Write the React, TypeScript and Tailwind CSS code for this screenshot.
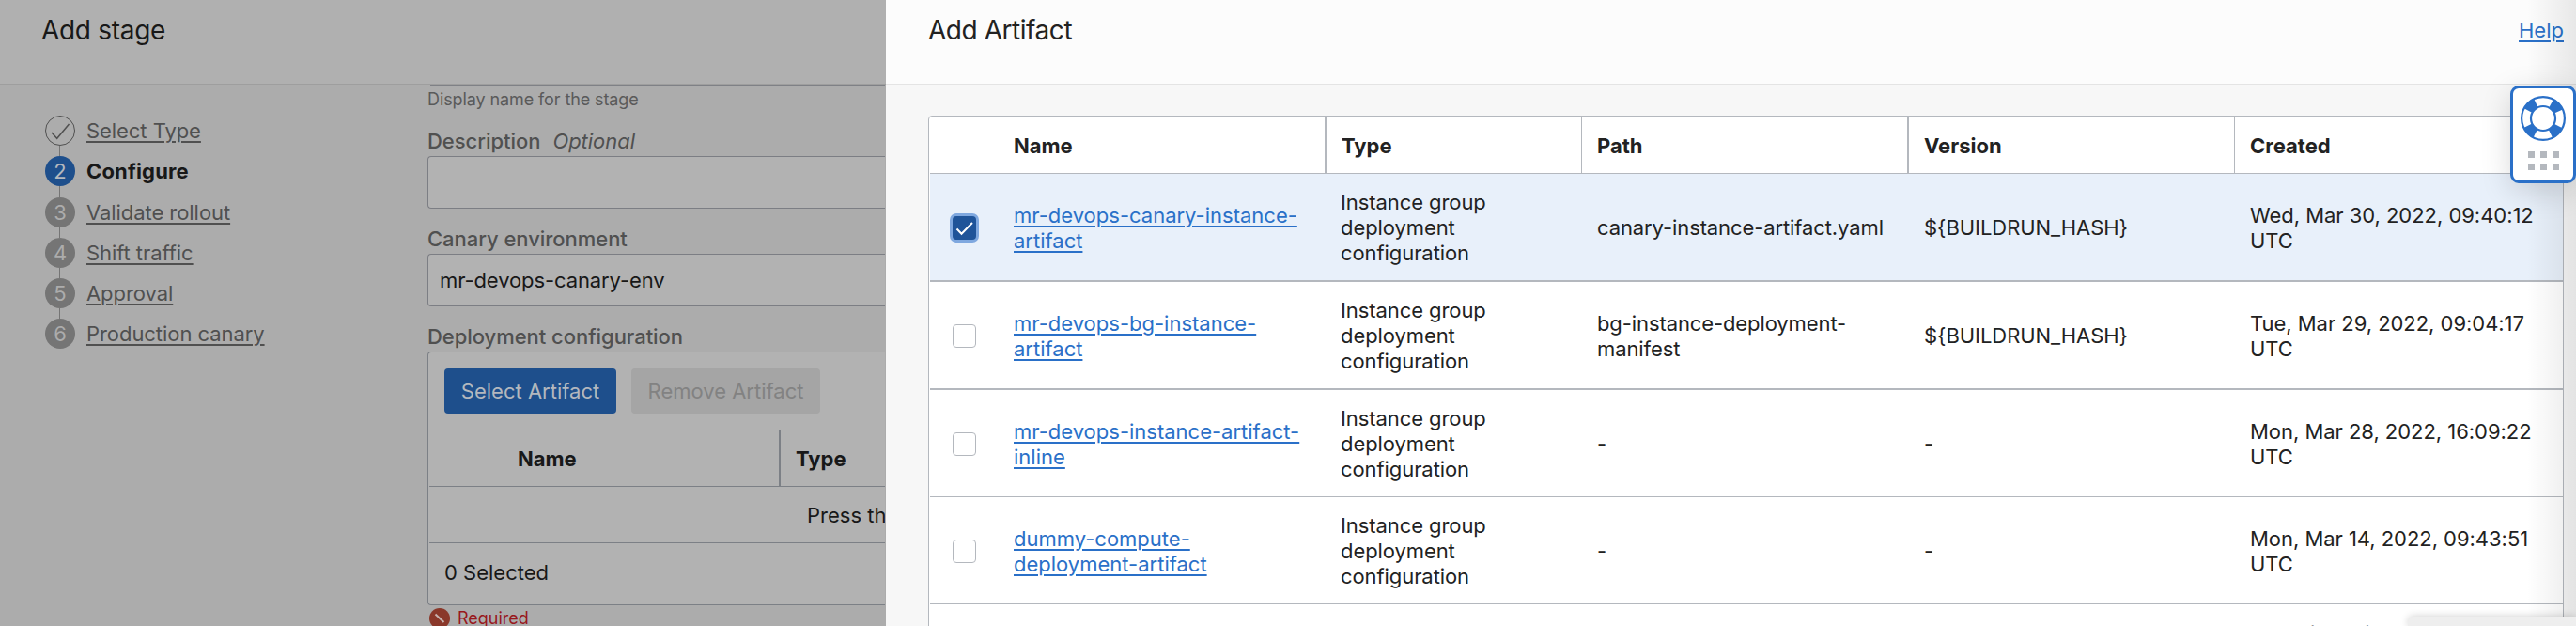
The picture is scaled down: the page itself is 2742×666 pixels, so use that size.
import type { ReactNode } from "react";

const steps = ["Select Type", "Configure", "Validate rollout", "Shift traffic", "Approval", "Production canary"];
const stepGap = ["h-[11px]", "h-[12px]", "h-[11px]", "h-[11px]", "h-[11px]"];

const TYPE = ["Instance group", "deployment", "configuration"];
type Row = { name: string[]; path: string[]; version: string; created: string; size: string; checked?: boolean };
const rows: Row[] = [
  { name: ["mr-devops-canary-instance-", "artifact"], path: ["canary-instance-artifact.yaml"], version: "${BUILDRUN_HASH}", created: "Wed, Mar 30, 2022, 09:40:12", size: "h-[115px] border-b-2 bg-[#e8f0fa]", checked: true },
  { name: ["mr-devops-bg-instance-", "artifact"], path: ["bg-instance-deployment-", "manifest"], version: "${BUILDRUN_HASH}", created: "Tue, Mar 29, 2022, 09:04:17", size: "h-[115px] border-b-2" },
  { name: ["mr-devops-instance-artifact-", "inline"], path: ["-"], version: "-", created: "Mon, Mar 28, 2022, 16:09:22", size: "h-[114px] border-b" },
  { name: ["dummy-compute-", "deployment-artifact"], path: ["-"], version: "-", created: "Mon, Mar 14, 2022, 09:43:51", size: "h-[114px] border-b" },
];
const cols = "grid grid-cols-[89px_348px_273px_348px_347px_349px]";

function Lines({ items }: { items: string[] }) {
  return (
    <>
      {items.map((t) => (
        <span key={t} className="block whitespace-nowrap">{t}</span>
      ))}
    </>
  );
}

function Label({ children }: { children: ReactNode }) {
  return <div className="flex h-[27px] items-center whitespace-nowrap font-medium tracking-[-0.04px] text-[#505050]">{children}</div>;
}

function StagePanel() {
  return (
    <section className="relative h-full w-[943px] shrink-0 overflow-hidden bg-[#acacac]">
      <header className="h-[90px] border-b border-[#9e9e9e] bg-[#b0b0b0] pl-[44px] pt-[14px] text-[28px] leading-[36px] tracking-[-0.3px] text-[#181818]">
        Add stage
      </header>
      <div className="flex text-[#181818]">
        <ol className="w-[455px] shrink-0 pl-12 pt-[33px]">
          {steps.map((s, i) => (
            <li key={s}>
              <div className="flex h-8 items-center">
                {i === 0 ? (
                  <svg className="size-8 shrink-0" viewBox="0 0 32 32" fill="none" stroke="#505050">
                    <circle cx="16" cy="16" r="15.5" />
                    <path d="M7 18l5.7 6.3L25.5 9" strokeWidth="1.5" />
                  </svg>
                ) : (
                  <span className={`flex size-8 shrink-0 items-center justify-center rounded-full text-[22px] leading-none ${i === 1 ? "bg-[#1e4f8c] text-[#b4b8be]" : "bg-[#757575] text-[#acacac]"}`}>
                    {i + 1}
                  </span>
                )}
                <span className={`ml-3 whitespace-nowrap ${i === 1 ? "font-bold tracking-[0.15px]" : "tracking-[-0.06px] text-[#505050] underline decoration-[2px] underline-offset-[3px]"}`}>{s}</span>
              </div>
              {i < 5 && <div className={`ml-[15px] w-px bg-[#757575] ${stepGap[i]}`} />}
            </li>
          ))}
        </ol>
        <div className="w-[487px] shrink-0">
          <div className="ml-[3px] h-px bg-[#7f8186]" />
          <div className="mt-[4px] h-[22px] whitespace-nowrap text-[18px] leading-[22px] tracking-[-0.1px] text-[#5a5a5a]">Display name for the stage</div>
          <div className="mt-[20px]">
            <Label>Description<span className="ml-[13px] font-normal italic">Optional</span></Label>
          </div>
          <div className="mt-[2px] h-[56px] rounded-l-[4px] border border-r-0 border-[#7c7e84] bg-[#b2b2b2]" />
          <div className="mt-[19px]"><Label>Canary environment</Label></div>
          <div className="mt-[2px] flex h-[56px] items-center whitespace-nowrap rounded-l-[4px] border border-r-0 border-[#7c7e84] bg-[#b2b2b2] pl-[12px] pt-px tracking-[-0.1px]">mr-devops-canary-env</div>
          <div className="mt-[19px]"><Label>Deployment configuration</Label></div>
          <div className="mt-[2px] h-[270px] overflow-hidden rounded-l-[4px] border border-r-0 border-[#7c8086] bg-[#b2b2b2] pl-px">
            <div className="flex h-[83px] items-start gap-4 border-b border-[#7c8086] pl-4 pt-[17px]">
              <div className="flex h-12 w-[183px] items-center justify-center whitespace-nowrap rounded-[4px] bg-[#1e4f8c] text-[#b4b8be]">Select Artifact</div>
              <div className="flex h-12 w-[201px] items-center justify-center whitespace-nowrap rounded-[4px] bg-[#a5a5a5] text-[#828282]">Remove Artifact</div>
            </div>
            <div className="flex h-[60px] border-b border-[#7c8086] font-bold">
              <div className="flex w-[374px] items-center border-r-2 border-[#7c8086] pl-[94px] pt-px">Name</div>
              <div className="flex items-center pl-[16px] pt-px">Type</div>
            </div>
            <div className="flex h-[60px] items-center whitespace-nowrap border-b border-[#7c8086] pl-[402px] pt-px">Press th</div>
            <div className="flex h-[63px] items-center pl-4">0 Selected</div>
          </div>
          <div className="mt-[3px] flex h-[22px] items-center gap-[8px] pl-[2px] text-[18px] leading-[20px] text-[#98181c]">
            <svg className="size-[22px] shrink-0" viewBox="0 0 22 22">
              <circle cx="11" cy="11" r="11" fill="#8a382a" />
              <path d="M6.5 6.5l9 8.5" stroke="#c8b4b0" strokeWidth="2" />
            </svg>
            <span className="-mt-px">Required</span>
          </div>
        </div>
      </div>
    </section>
  );
}

function ArtifactPanel() {
  return (
    <section className="h-full w-[1799px] shrink-0 overflow-hidden bg-[#f7f7f7]">
      <header className="flex h-[90px] items-start justify-between border-b border-[#e4e4e4] bg-[#fcfcfc] pl-[45px] pr-[13px] pt-[14px]">
        <h1 className="text-[28px] leading-[36px] tracking-[-0.45px]">Add Artifact</h1>
        <a className="mt-[5px] text-[#2a70c8] underline decoration-[2px] underline-offset-[3px]">Help</a>
      </header>
      <div className="ml-[45px] mt-[33px] h-[600px] w-[1741px] rounded-t-[4px] border border-[#b4b8be] bg-white pl-px pt-px">
        <div className={`${cols} h-[60px] border-b border-[#b4b8be] font-bold`}>
          <div />
          <div className="flex items-center pt-0.5">Name</div>
          <div className="-ml-[17px] flex items-center border-l-2 border-[#b4b8be] pl-[16px] pt-0.5">Type</div>
          <div className="-ml-[17px] flex items-center border-l border-[#b4b8be] pl-[16px] pt-0.5">Path</div>
          <div className="-ml-[18px] flex items-center border-l-2 border-[#b4b8be] pl-[16px] pt-0.5">Version</div>
          <div className="-ml-[17px] flex items-center border-l border-[#b4b8be] pl-[16px] pt-0.5">Created</div>
        </div>
        {rows.map((r) => (
          <div key={r.created} className={`${cols} items-center border-[#b4b8be] pt-0.5 ${r.size}`}>
            <div className="pl-6">
              {r.checked ? (
                <div className="flex size-[25px] items-center justify-center rounded-[4px] bg-[#1f5499] ring-[3px] ring-[#7fa8df]">
                  <svg className="size-[25px]" viewBox="0 0 25 25" fill="none" stroke="white" strokeWidth="2">
                    <path d="M4.5 13.5l5 5.2L21 7" />
                  </svg>
                </div>
              ) : (
                <div className="size-[25px] rounded-[4px] border border-[#b4b8be] bg-white" />
              )}
            </div>
            <div className="text-[#2a70c8] underline decoration-[2px] underline-offset-[3px]"><Lines items={r.name} /></div>
            <div className="tracking-[-0.08px]"><Lines items={TYPE} /></div>
            <div className="tracking-[-0.1px]"><Lines items={r.path} /></div>
            <div className="tracking-[-0.05px]">{r.version}</div>
            <div className="tracking-[-0.04px]"><Lines items={[r.created, "UTC"]} /></div>
          </div>
        ))}
        <div className="grid grid-cols-[1395px_1fr] pl-4 pt-[18px]">
          <span>1 Selected</span>
          <span>Showing 4 items</span>
        </div>
      </div>
    </section>
  );
}

export default function App() {
  return (
    <main className="relative flex h-[666px] w-[2742px] overflow-hidden font-['Inter',sans-serif] text-[22px] leading-[27px] text-[#222222]">
      <StagePanel />
      <ArtifactPanel />
      <div className="absolute right-0 top-0 h-full w-[52px] bg-linear-to-r from-transparent to-black/8" />
      <div className="absolute right-0 top-[91px] flex h-[104px] w-[70px] flex-col items-center rounded-[9px] border-[3px] border-[#2a70c8] bg-white pt-[8px] shadow-[0_8px_32px_rgba(0,0,0,0.15)]">
        <svg className="size-12" viewBox="0 0 48 48" fill="none" stroke="#2a70c8">
          <circle cx="24" cy="24" r="18" strokeWidth="10" strokeDasharray="11.5 16.774" strokeDashoffset="-8.387" />
          <circle cx="24" cy="24" r="22.9" strokeWidth="2.2" />
          <circle cx="24" cy="24" r="13" strokeWidth="2.2" />
        </svg>
        <div className="mt-[11px] grid grid-cols-3 gap-[6px]">
          {[0, 1, 2, 3, 4, 5].map((i) => (
            <span key={i} className="size-[7px] bg-[#b4b8be]" />
          ))}
        </div>
      </div>
      <div className="absolute bottom-0 right-0 h-[10px] w-[179px] rounded-tl-[6px] bg-[#eeeeee] shadow-[0_0_8px_rgba(0,0,0,0.2)]" />
    </main>
  );
}
